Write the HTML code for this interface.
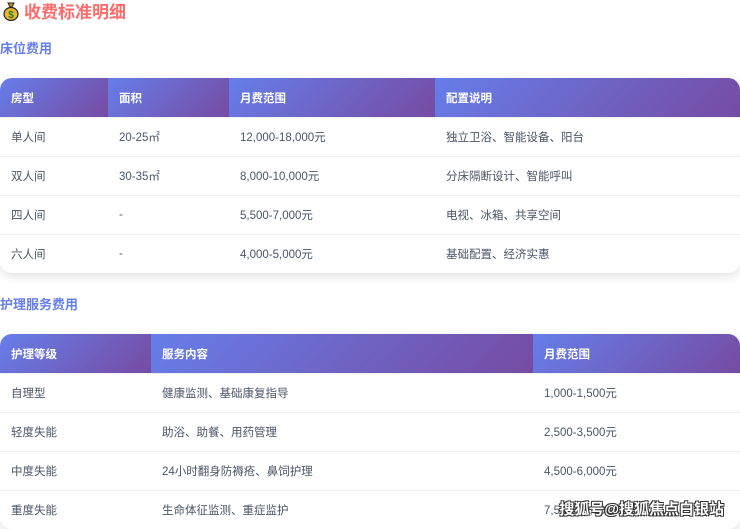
<!DOCTYPE html>
<html><head><meta charset="utf-8"><style>
*{margin:0;padding:0;box-sizing:border-box}
body{width:740px;height:524px;overflow:hidden;background:#fff;font-family:"Liberation Sans","Noto Sans CJK SC",sans-serif;position:relative}
.t{position:absolute;left:2px;top:1px;font-size:17px;font-weight:bold;color:#ff6b6b;line-height:22px}
.t .ic{display:inline-block;width:18px;height:20px;vertical-align:-3px;margin-right:4px}
.h{position:absolute;left:0;font-size:13px;font-weight:bold;color:#667eea}
table{position:absolute;left:0;width:740px;border-collapse:collapse;border-radius:12px;overflow:hidden;box-shadow:0 3px 10px rgba(0,0,0,0.12);font-size:11.5px;color:#4a5568}
th{background:linear-gradient(135deg,#667eea,#764ba2);color:#fff;font-weight:bold;text-align:left;padding:0 11px;height:39px}
td{padding:0 11px;height:39px;border:0;background:linear-gradient(#eef0f3,#eef0f3) top/100% 1px no-repeat #fff}
.wm{position:absolute;right:16px;bottom:5px;font-size:15px;font-weight:bold;color:#fff;text-shadow:-1px -1px 0 #333,1px -1px 0 #333,-1px 1px 0 #333,1px 1px 0 #333}
</style></head><body>
<div class="t"><svg class="ic" viewBox="0 0 18 20"><path d="M6 2h6l-2 4h-2z" fill="#c8901e" stroke="#222" stroke-width="1"/><ellipse cx="9" cy="13" rx="7" ry="6.5" fill="#e8b830" stroke="#222" stroke-width="1.2"/><text x="9" y="17" font-size="10" font-weight="bold" text-anchor="middle" fill="#2a7a2a">$</text></svg>收费标准明细</div>
<div class="h" style="top:38px">床位费用</div>
<table style="top:78px">
<tr><th style="width:108px">房型</th><th style="width:121px">面积</th><th style="width:206px">月费范围</th><th>配置说明</th></tr>
<tr><td>单人间</td><td>20-25㎡</td><td>12,000-18,000元</td><td>独立卫浴、智能设备、阳台</td></tr>
<tr><td>双人间</td><td>30-35㎡</td><td>8,000-10,000元</td><td>分床隔断设计、智能呼叫</td></tr>
<tr><td>四人间</td><td>-</td><td>5,500-7,000元</td><td>电视、冰箱、共享空间</td></tr>
<tr><td>六人间</td><td>-</td><td>4,000-5,000元</td><td>基础配置、经济实惠</td></tr>
</table>
<div class="h" style="top:294px">护理服务费用</div>
<table style="top:334px">
<tr><th style="width:151px">护理等级</th><th style="width:382px">服务内容</th><th>月费范围</th></tr>
<tr><td>自理型</td><td>健康监测、基础康复指导</td><td>1,000-1,500元</td></tr>
<tr><td>轻度失能</td><td>助浴、助餐、用药管理</td><td>2,500-3,500元</td></tr>
<tr><td>中度失能</td><td>24小时翻身防褥疮、鼻饲护理</td><td>4,500-6,000元</td></tr>
<tr><td>重度失能</td><td>生命体征监测、重症监护</td><td>7,500-10,000元</td></tr>
</table>
<div class="wm">搜狐号@搜狐焦点白银站</div>
</body></html>
